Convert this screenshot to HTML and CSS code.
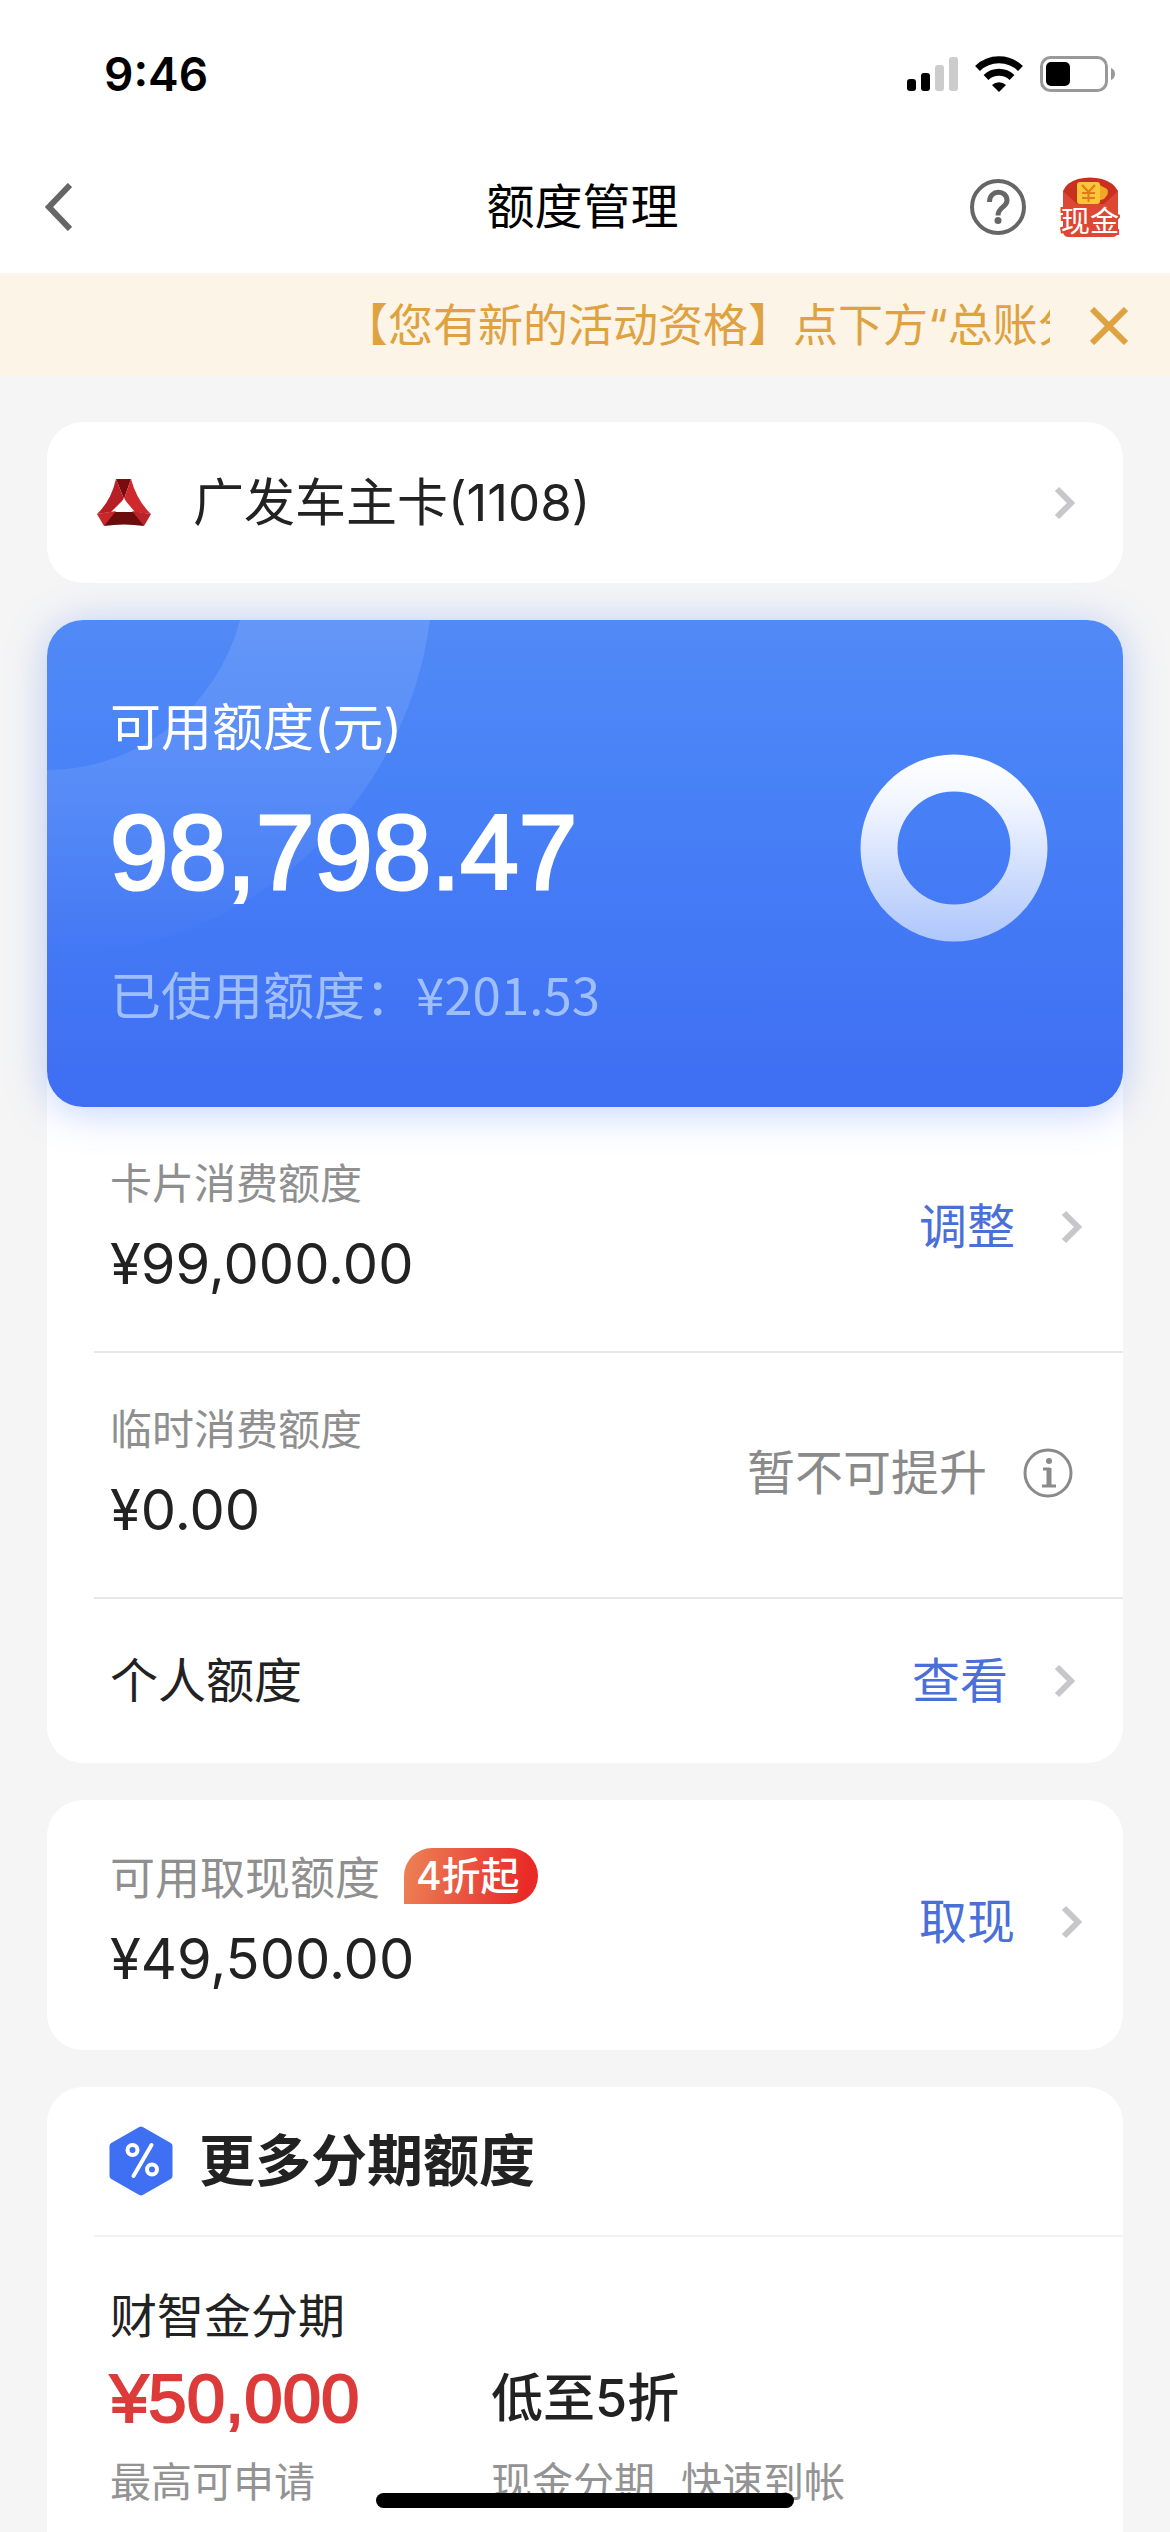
FILE: index.html
```html
<!DOCTYPE html>
<html lang="zh-CN">
<head>
<meta charset="utf-8">
<meta name="viewport" content="width=device-width, initial-scale=1">
<title>额度管理</title>
<link rel="stylesheet" href="styles.css">
</head>
<body>
<svg class="defs" aria-hidden="true">
  <symbol id="chevron" viewBox="0 0 21 34">
    <path d="M3 3 17 17 3 31" fill="none" stroke="currentColor" stroke-width="6"/>
  </symbol>
</svg>

<div class="status">
  <time class="status-time">9:46</time>
  <div class="status-icons">
    <svg width="51" height="34" viewBox="0 0 51 34" aria-hidden="true">
      <rect x="0" y="22" width="9" height="12" rx="3"/>
      <rect x="14" y="16" width="9" height="18" rx="3"/>
      <rect x="28" y="8" width="9" height="26" rx="3" fill="#ccc"/>
      <rect x="42" y="0" width="9" height="34" rx="3" fill="#ccc"/>
    </svg>
    <svg width="48" height="36" viewBox="0 0 48 36" aria-hidden="true">
      <path d="M2.500 12.500A31 31 0 0 1 45.500 12.500" fill="none" stroke="#000" stroke-width="7"/>
      <path d="M11 21.500A19 19 0 0 1 37 21.500" fill="none" stroke="#000" stroke-width="7"/>
      <path d="M24 36 17 29A10 10 0 0 1 31 29Z"/>
    </svg>
    <svg width="75" height="36" viewBox="0 0 75 36" aria-hidden="true">
      <rect x="1.500" y="1.500" width="65" height="33" rx="9" fill="none" stroke="#999" stroke-width="3"/>
      <rect x="6" y="6" width="24" height="24" rx="5"/>
      <path d="M71 12A6.500 6.500 0 0 1 71 24Z" fill="#999"/>
    </svg>
  </div>
</div>

<header class="header">
  <button class="icon-button back" aria-label="返回">
    <svg width="27" height="48" viewBox="0 0 27 48" aria-hidden="true"><path d="M25 2 4 24 25 46" fill="none" stroke="#666" stroke-width="6"/></svg>
  </button>
  <h1 class="title">额度管理</h1>
  <div class="header-tools">
    <button class="icon-button" aria-label="帮助">
      <svg width="56" height="56" viewBox="0 0 56 56" fill="none" stroke="#666" aria-hidden="true">
        <circle cx="28" cy="28" r="26" stroke-width="4"/>
        <path d="M19.500 23C19.500 10 37 10.500 37 21.500C37 28 28 28 28 36.500" stroke-width="5"/>
        <circle cx="28" cy="41.500" r="3.500" fill="#666" stroke="none"/>
      </svg>
    </button>
    <button class="icon-button" aria-label="现金活动">
      <svg width="60" height="60" viewBox="0 0 60 60" aria-hidden="true">
        <path d="M3 14Q7 5 18 2Q30-1 42 2Q53 5 58 14V31H3Z" fill="#c9301f"/>
        <path d="M3 14 17 27H44L58 14V54Q58 60 52 60H9Q3 60 3 54Z" fill="#dc4834"/>
        <path d="M36 6 47 12Q50 16 44 22L30 26Z" fill="#f3a727"/>
        <rect x="17" y="5" width="23" height="22" rx="3" fill="#fbc63a"/>
        <path d="M22 8 28.500 15 35 8M28.500 15V25M22 16H35M22 21H35" fill="none" stroke="#e07a1a" stroke-width="2"/>
        <text class="cash-text" x="30" y="55" text-anchor="middle">现金</text>
      </svg>
    </button>
  </div>
</header>

<div class="notice">
  <p class="notice-text">【您有新的活动资格】点下方“总账分期”</p>
  <button class="icon-button" aria-label="关闭">
    <svg width="38" height="38" viewBox="0 0 38 38" aria-hidden="true"><path d="M2 2 36 36M36 2 2 36" fill="none" stroke="#dfa240" stroke-width="6"/></svg>
  </button>
</div>

<main class="main">
  <a class="panel card-picker" href="#cards">
    <svg width="54" height="48" viewBox="0 0 54 48" aria-hidden="true">
      <path d="M19 0H34L27 20Z" fill="#7a0c0f"/>
      <path d="M19 0 27 20 14 33 0 35Q14 22 19 0Z" fill="#b81f24"/>
      <path d="M34 0 27 20 38 33 54 35Q40 22 34 0Z" fill="#d0292d"/>
      <path d="M14 33H40L47 47Q27 44 7 47Z" fill="#6c0d0d"/>
      <path d="M0 35 19 32 7 47Z" fill="#c7262b"/>
      <path d="M54 35 35 32 47 47Z" fill="#b92429"/>
      <path d="M27 19 20 32H34Z" fill="#fff"/>
    </svg>
    <span class="card-name">广发车主卡(1108)</span>
    <svg class="chevron" aria-hidden="true"><use href="#chevron"/></svg>
  </a>

  <section class="panel">
    <div class="hero">
      <svg class="hero-rings" viewBox="0 0 400 340" aria-hidden="true">
        <defs>
          <linearGradient id="fade" x1="0" y1="0" x2="0" y2="340" gradientUnits="userSpaceOnUse">
            <stop offset="0" stop-color="#fff" stop-opacity=".11"/>
            <stop offset=".45" stop-color="#fff" stop-opacity=".09"/>
            <stop offset="1" stop-color="#fff" stop-opacity="0"/>
          </linearGradient>
        </defs>
        <path d="M193 0H383A386 386 0 0 1 0 336V150A200 200 0 0 0 193 0Z" fill="url(#fade)"/>
      </svg>
      <div class="hero-info">
        <h2 class="hero-label">可用额度(元)</h2>
        <p class="hero-amount">98,798.47</p>
        <p class="hero-used">已使用额度：¥201.53</p>
      </div>
      <svg class="donut" viewBox="0 0 188 188" role="img" aria-label="额度占比">
        <defs>
          <linearGradient id="donut" x1="0" y1="0" x2="0" y2="188" gradientUnits="userSpaceOnUse">
            <stop offset="0" stop-color="#fff"/>
            <stop offset=".25" stop-color="#f2f6ff"/>
            <stop offset="1" stop-color="#aec6fb"/>
          </linearGradient>
        </defs>
        <circle cx="94" cy="94" r="75" fill="none" stroke="url(#donut)" stroke-width="37"/>
      </svg>
    </div>

    <div class="row">
      <div class="quota">
        <h3 class="label">卡片消费额度</h3>
        <p class="amount">¥99,000.00</p>
      </div>
      <a class="action" href="#adjust">调整<svg class="chevron" aria-hidden="true"><use href="#chevron"/></svg></a>
    </div>
    <div class="row">
      <div class="quota">
        <h3 class="label">临时消费额度</h3>
        <p class="amount">¥0.00</p>
      </div>
      <div class="action action-off">
        <span>暂不可提升</span>
        <button class="icon-button" aria-label="说明">
          <svg width="50" height="50" viewBox="0 0 50 50" fill="none" stroke="#8a8a8a" aria-hidden="true">
            <circle cx="25" cy="25" r="23" stroke-width="3"/>
            <circle cx="26" cy="13" r="3" fill="#8a8a8a" stroke="none"/>
            <path d="M20 21H27" stroke-width="3"/>
            <path d="M26 20V38" stroke-width="5"/>
            <path d="M19 38H33" stroke-width="3"/>
          </svg>
        </button>
      </div>
    </div>
    <div class="row row-single">
      <h3 class="row-title">个人额度</h3>
      <a class="action" href="#personal">查看<svg class="chevron" aria-hidden="true"><use href="#chevron"/></svg></a>
    </div>
  </section>

  <section class="panel">
    <div class="row row-cash">
      <div class="quota">
        <div class="label-line">
          <h3 class="label label-large">可用取现额度</h3>
          <span class="badge">4折起</span>
        </div>
        <p class="amount">¥49,500.00</p>
      </div>
      <a class="action" href="#withdraw">取现<svg class="chevron" aria-hidden="true"><use href="#chevron"/></svg></a>
    </div>
  </section>

  <section class="panel more">
    <div class="more-head">
      <svg width="64" height="70" viewBox="0 0 64 70" aria-hidden="true">
        <path d="M32 4 60 20V50L32 66 4 50V20Z" fill="#3f6ff2" stroke="#3f6ff2" stroke-width="7" stroke-linejoin="round"/>
        <g fill="none" stroke="#fff" stroke-width="4" stroke-linecap="round">
          <circle cx="23.500" cy="24" r="5"/>
          <circle cx="43" cy="43.500" r="5"/>
          <path d="M42.500 19 24.500 50"/>
        </g>
      </svg>
      <h2 class="more-title">更多分期额度</h2>
    </div>
    <div class="offer">
      <h3 class="offer-name">财智金分期</h3>
      <div class="offer-grid">
        <p class="offer-amount">¥50,000</p>
        <p class="offer-rate">低至5折</p>
        <p class="offer-note">最高可申请</p>
        <p class="offer-note"><span>现金分期</span><span>快速到帐</span></p>
      </div>
    </div>
  </section>
</main>
<div class="home-indicator"></div>
</body>
</html>
```

FILE: styles.css
```css
* {
  box-sizing: border-box;
}

body,
h1,
h2,
h3,
p {
  margin: 0;
  font-weight: 400;
}

body {
  display: flex;
  flex-direction: column;
  min-height: 100vh;
  background: #f5f5f5;
  color: #222;
  font-family: Inter, "Noto Sans CJK SC", sans-serif;
  font-size: 48px;
  line-height: 60px;
}

a {
  color: inherit;
  text-decoration: none;
}

svg {
  display: block;
  flex: none;
}

.defs {
  position: absolute;
  width: 0;
  height: 0;
}

.icon-button {
  display: block;
  padding: 0;
  border: 0;
  background: none;
}

/* Status bar */
.status {
  display: flex;
  align-items: center;
  justify-content: space-between;
  padding: 44px 55px 37px 104px;
  background: #fff;
}

.status-time {
  color: #000;
  font-size: 46px;
  font-weight: 600;
}

.status-icons {
  display: flex;
  align-items: center;
  gap: 17px;
}

/* Page header */
.header {
  display: grid;
  grid-template-columns: 1fr auto 1fr;
  align-items: center;
  padding: 36px 50px 36px 45px;
  background: #fff;
}

.back {
  justify-self: start;
}

.title {
  color: #000;
  font-size: 48px;
}

.header-tools {
  display: flex;
  align-items: center;
  justify-self: end;
  gap: 34px;
}

.cash-text {
  fill: #fff;
  stroke: #dc4834;
  stroke-width: 4px;
  paint-order: stroke;
  font-size: 29px;
  font-weight: 500;
}

/* Scrolling notice */
.notice {
  display: flex;
  align-items: center;
  justify-content: space-between;
  padding: 23px 42px 20px 343px;
  background: #fcf4e7;
}

.notice-text {
  flex: 1;
  margin-right: 40px;
  overflow: hidden;
  color: #dfa240;
  font-size: 45px;
  white-space: nowrap;
}

/* Panels */
.main {
  display: flex;
  flex: 1;
  flex-direction: column;
  gap: 37px;
  padding: 46px 47px 0;
}

.panel {
  border-radius: 36px;
  background: #fff;
}

.chevron {
  width: 21px;
  height: 34px;
  color: #c7c7cb;
}

.card-picker {
  display: flex;
  align-items: center;
  gap: 42px;
  padding: 51px 48px 50px 50px;
}

.card-name {
  flex: 1;
  font-size: 51px;
}

/* Available credit */
.hero {
  position: relative;
  display: flex;
  align-items: center;
  justify-content: space-between;
  padding: 78px 75px 84px 63px;
  overflow: hidden;
  border-radius: 36px;
  background: linear-gradient(#518af6, #4882f7 32%, #3e6ef2);
  box-shadow: 0 4px 40px rgba(70, 120, 245, 0.35);
  color: #fff;
}

.hero-rings {
  position: absolute;
  top: 0;
  left: 0;
  width: 400px;
}

.hero-info {
  position: relative;
}

.hero-label {
  font-size: 51px;
}

.hero-amount {
  margin: 27px 0 42px;
  font-family: "Liberation Sans", sans-serif;
  font-size: 105px;
  line-height: 136px;
  -webkit-text-stroke: 3px currentColor;
}

.hero-used {
  color: #9fbffb;
  font-family: "Noto Sans CJK SC", sans-serif;
  font-size: 51px;
}

.donut {
  width: 188px;
  margin-bottom: 25px;
}

/* Quota rows */
.row {
  display: flex;
  align-items: center;
  justify-content: space-between;
  margin-left: 47px;
  padding: 44px 41px 49px 16px;
  border-bottom: 2px solid #e8e8e8;
}

.row:last-child {
  border-bottom: 0;
}

.row-single {
  padding: 52px 48px 52px 16px;
}

.row-cash {
  padding: 46px 41px 53px 16px;
}

.row-title {
  font-size: 48px;
}

.label-line {
  display: flex;
  align-items: center;
  gap: 24px;
}

.label {
  color: #8f8f8f;
  font-family: "Noto Sans CJK SC", sans-serif;
  font-size: 42px;
}

.label-large {
  font-size: 45px;
}

.amount {
  margin-top: 15px;
  font-size: 56px;
  line-height: 76px;
}

.badge {
  padding: 0 18px 0 12px;
  border-radius: 28px 28px 28px 0;
  background: linear-gradient(100deg, #ec8355, #e9483a 60%, #e92a26 90%);
  color: #fff;
  font-size: 39px;
  font-weight: 500;
  line-height: 56px;
}

.action {
  display: flex;
  align-items: center;
  gap: 46px;
  color: #4a6fd8;
}

.action-off {
  gap: 36px;
  padding-right: 9px;
  color: #8a8a8a;
}

/* Instalment offers */
.more {
  flex: 1;
  border-radius: 36px 36px 0 0;
}

.more-head {
  display: flex;
  align-items: center;
  gap: 26px;
  margin-left: 47px;
  padding: 39px 15px;
  border-bottom: 2px solid #f2f2f2;
}

.more-title {
  font-size: 56px;
  font-weight: 700;
  line-height: 70px;
}

.offer {
  padding: 46px 63px 23px;
}

.offer-name {
  font-family: "Noto Sans CJK SC", sans-serif;
  font-size: 47px;
}

.offer-grid {
  display: grid;
  grid-template-columns: 381px 1fr;
  row-gap: 14px;
  margin-top: 18px;
}

.offer-amount {
  color: #dc3b3a;
  font-family: "Liberation Sans", sans-serif;
  font-size: 69px;
  line-height: 76px;
  -webkit-text-stroke: 2px currentColor;
}

.offer-rate {
  font-size: 52px;
  font-weight: 500;
  line-height: 76px;
}

.offer-note {
  display: flex;
  gap: 26px;
  color: #939393;
  font-family: "Noto Sans CJK SC", sans-serif;
  font-size: 41px;
  line-height: 56px;
}

.home-indicator {
  position: fixed;
  bottom: 24px;
  left: 50%;
  width: 418px;
  height: 15px;
  margin-left: -209px;
  border-radius: 8px;
  background: #000;
}
```
